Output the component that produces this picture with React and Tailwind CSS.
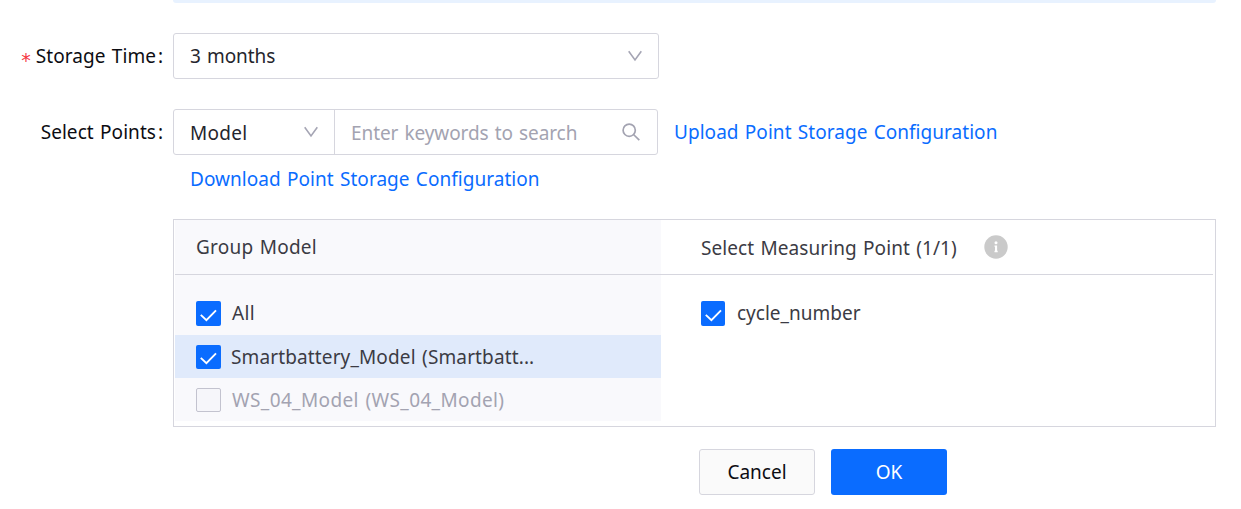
import React from "react";

function Chevron() {
  return (
    <svg width="14" height="12" viewBox="0 0 14 12" fill="none" stroke="#a5a5b4" strokeWidth="1.6" className="shrink-0">
      <path d="M0.7 1.2 L7 9.9 L13.3 1.2" />
    </svg>
  );
}

function Check({ checked = true, className = "" }) {
  return checked ? (
    <span className={`flex shrink-0 items-center justify-center rounded-[2px] bg-[#0a6cff] ${className}`}>
      <svg width="17" height="13" viewBox="0 0 17 13" fill="none" stroke="#fff" strokeWidth="1.9" className="mt-[3px]">
        <path d="M0.8 5.9 L6.4 11.2 L16 1.4" />
      </svg>
    </span>
  ) : (
    <span className={`shrink-0 rounded-[2px] border border-[#c3c3cf] bg-[#f6f6fa] ${className}`} />
  );
}

function Label({ required, children }) {
  return (
    <div className="flex w-[173px] shrink-0 items-center justify-end pr-[9px] text-[#0c0c12]">
      {required && (
        <span className="mr-[5px] mt-[7px] font-['DejaVu_Sans',sans-serif] text-[19px] text-[#f5363f]">*</span>
      )}
      <span className="tracking-[0.06px]">{children}</span>
      <span className="ml-[2px] w-[6px]">:</span>
    </div>
  );
}

export default function App() {
  return (
    <div className="flex h-[509px] w-[1241px] flex-col overflow-hidden whitespace-nowrap bg-white font-['Noto_Sans',sans-serif] text-[19px] leading-[28px] [word-spacing:1.3px]">
      <div className="ml-[173px] h-[3px] w-[1043px] shrink-0 rounded-b-[3px] bg-[#e8f2ff]" />

      <div className="mt-[30px] flex h-[46px] shrink-0 items-center">
        <Label required>Storage Time</Label>
        <div className="flex h-[46px] w-[486px] items-center justify-between rounded-[3px] border border-[#d6d6de] pl-4 pr-[16px] text-[#25252d]">
          <span className="tracking-[-0.08px]">3 months</span>
          <Chevron />
        </div>
      </div>

      <div className="mt-[30px] flex h-[46px] shrink-0 items-center">
        <Label>Select Points</Label>
        <div className="flex h-[46px] w-[485px] rounded-[3px] border border-[#d6d6de]">
          <div className="flex w-[161px] items-center justify-between border-r border-[#d6d6de] pl-4 pr-[16px] text-[#25252d]">
            <span className="pt-[2px] tracking-[0.3px]">Model</span>
            <Chevron />
          </div>
          <div className="flex flex-1 items-center justify-between pl-[16px] pr-[17px] text-[#a3a3b1]">
            <span className="pt-[2px] tracking-[-0.09px]">Enter keywords to search</span>
            <svg width="18" height="18" viewBox="0 0 18 18" fill="none" stroke="#a3a3b1" strokeWidth="1.7">
              <circle cx="7.2" cy="7.2" r="6.1" />
              <path d="M11.5 11.5 L17.3 17.2" />
            </svg>
          </div>
        </div>
        <span className="ml-4 tracking-[0.04px] text-[#0a6cff]">Upload Point Storage Configuration</span>
      </div>

      <div className="ml-[190px] mt-[10px] h-[28px] shrink-0 text-[#0a6cff]">
        <span className="tracking-[0.04px]">Download Point Storage Configuration</span>
      </div>

      <div className="ml-[173px] mt-[26px] flex h-[208px] w-[1043px] shrink-0 border border-[#d6d6de] pl-px pr-[2px] text-[#3b3b44]">
        <div className="h-[201px] w-[486px] bg-[#f9f9fc]">
          <div className="flex h-[55px] items-center border-b border-[#d6d6de] pl-[21px]">
            <span className="tracking-[0.22px]">Group Model</span>
          </div>
          <div className="mt-[17px] flex h-[43px] items-center pl-[21px]">
            <Check className="h-[25px] w-[25px]" />
            <span className="ml-[11px] pb-[2px] tracking-[0.4px]">All</span>
          </div>
          <div className="flex h-[43px] items-center bg-[#e0eafb] pl-[21px]">
            <Check className="h-[24px] w-[25px]" />
            <span className="ml-[10px] tracking-[0.13px]">Smartbattery_Model (Smartbatt...</span>
          </div>
          <div className="flex h-[43px] items-center pl-[21px] text-[#a3a3b1]">
            <Check checked={false} className="h-[24px] w-[25px]" />
            <span className="ml-[11px] tracking-[0.37px]">WS_04_Model (WS_04_Model)</span>
          </div>
        </div>
        <div className="flex-1">
          <div className="flex h-[55px] items-center border-b border-[#d6d6de] pl-[40px]">
            <span className="w-[283px] pt-[2px] tracking-[0.07px]">Select Measuring Point (1/1)</span>
            <svg width="24" height="24" viewBox="0 0 24 24" className="mb-px">
              <circle cx="12" cy="12" r="11.7" fill="#cacaca" />
              <circle cx="12" cy="7.7" r="1.5" fill="#fff" />
              <path d="M10.5 10.4 H13.1 V15.8 H13.7 V17.2 H10.5 V15.8 H11 V11.8 H10.5 Z" fill="#fff" />
            </svg>
          </div>
          <div className="mt-[17px] flex h-[43px] items-center pl-[40px]">
            <Check className="h-[25px] w-[24px]" />
            <span className="ml-[12px] pb-[2px]">cycle_number</span>
          </div>
        </div>
      </div>

      <div className="ml-[699px] mt-[22px] flex shrink-0 gap-4">
        <button className="h-[46px] w-[116px] rounded-[3px] border border-[#d6d6de] bg-[#fafafa] text-[#0c0c12]">Cancel</button>
        <button className="h-[46px] w-[116px] rounded-[3px] bg-[#0a6cff] text-white">OK</button>
      </div>
    </div>
  );
}
